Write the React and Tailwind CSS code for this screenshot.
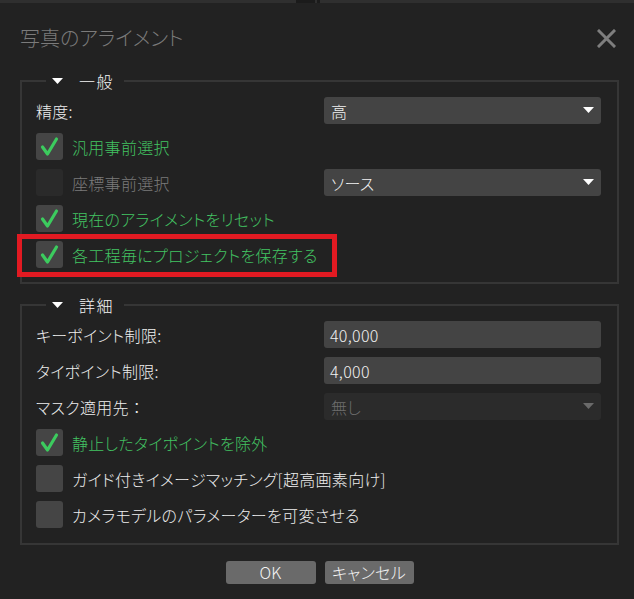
import React from "react";

const Check = () => (
  <svg width="27" height="27" viewBox="0 0 27 27">
    <polyline points="6.5,14 11.5,21 20.5,6" fill="none" stroke="#3ccb5e" strokeWidth="3.2" strokeLinecap="round" strokeLinejoin="round" />
  </svg>
);

const Arrow = ({ color = "#ffffff" }) => (
  <svg width="11" height="7" viewBox="0 0 11 7">
    <polygon points="0,0 11,0 5.5,6" fill={color} />
  </svg>
);

const CheckRow = ({ checked, disabled, label, children }) => (
  <div className="relative flex items-center h-[27px]">
    <div className={`w-[27px] h-[27px] rounded-[3px] ${disabled ? "bg-[#2a2a2a]" : "bg-[#454545]"}`}>
      {checked ? <Check /> : null}
    </div>
    <span className={`ml-[9px] ${checked ? "text-[#43c463]" : disabled ? "text-[#7b7b7b]" : "text-[#eeeeee]"}`}>{label}</span>
    {children}
  </div>
);

const Select = ({ value, disabled }) => (
  <div className={`w-[277px] h-[27px] rounded-[3px] flex items-center justify-between pl-[7px] pr-[7px] ${disabled ? "bg-[#2b2b2b] text-[#6e6e6e]" : "bg-[#444444] text-[#f2f2f2]"}`}>
    <span>{value}</span>
    <Arrow color={disabled ? "#6a6a6a" : "#ffffff"} />
  </div>
);

const Input = ({ value }) => (
  <div className="w-[277px] h-[27px] rounded-[3px] flex items-center pl-[6px] bg-[#444444] text-[#f2f2f2]">{value}</div>
);

const LabelRow = ({ label, children }) => (
  <div className="flex items-center justify-between h-[27px]">
    <span className="text-[#eeeeee]">{label}</span>
    {children}
  </div>
);

const Legend = ({ text }) => (
  <div className="-mt-[12px] ml-[10px] w-fit h-[22px] bg-[#222222] pl-[6px] pr-[10px] flex items-center gap-[16px]">
    <Arrow />
    <span className="text-[#f4f4f4] tracking-[1.5px]">{text}</span>
  </div>
);

export default function App() {
  return (
    <div
      className="w-[634px] h-[599px] bg-[#222222] overflow-hidden text-[16px] font-light leading-[20px] tracking-[0.3px] font-['Noto_Sans_CJK_JP','Noto_Sans',sans-serif] [font-feature-settings:'palt']"
    >
      <div className="h-[3px] flex">
        <div className="w-[296px] bg-[#2f2f2f]" />
        <div className="w-[19px] bg-[#1b1b1b]" />
        <div className="w-[2px] bg-[#2f2f2f]" />
        <div className="w-[3px] bg-[#1b1b1b]" />
        <div className="flex-1 bg-[#2f2f2f]" />
      </div>
      <div className="pl-[20px] pr-[15px]">
        <div className="mt-[21px] h-[28px] flex items-center justify-between">
          <span className="text-[20px] leading-[28px] text-[#7b7b7b] tracking-[0px]">写真のアライメント</span>
          <svg width="19" height="19" viewBox="0 0 19 19" className="mr-[3px]">
            <path d="M2 2 L17 17 M17 2 L2 17" stroke="#7e7e7e" strokeWidth="3" strokeLinecap="square" />
          </svg>
        </div>

        <div className="mt-[28px] border-2 border-[#363636] pl-[14px] pr-[16px] pb-[14px]">
          <Legend text="一般" />
          <div className="pt-[5px] flex flex-col gap-[9px]">
            <LabelRow label="精度:">
              <Select value="高" />
            </LabelRow>
            <CheckRow checked label="汎用事前選択" />
            <div className="flex items-center justify-between">
              <CheckRow disabled label="座標事前選択" />
              <Select value="ソース" />
            </div>
            <CheckRow checked label="現在のアライメントをリセット" />
            <CheckRow checked label="各工程毎にプロジェクトを保存する">
              <div className="absolute left-[-19px] top-[-7px] w-[320px] h-[43px] border-[5px] border-[#e21a22]" />
            </CheckRow>
          </div>
        </div>

        <div className="mt-[20px] border-2 border-[#363636] pl-[14px] pr-[16px] pb-[15px]">
          <Legend text="詳細" />
          <div className="pt-[5px] flex flex-col gap-[9px]">
            <LabelRow label="キーポイント制限:">
              <Input value="40,000" />
            </LabelRow>
            <LabelRow label="タイポイント制限:">
              <Input value="4,000" />
            </LabelRow>
            <LabelRow label="マスク適用先 ：">
              <Select value="無し" disabled />
            </LabelRow>
            <CheckRow checked label="静止したタイポイントを除外" />
            <CheckRow label="ガイド付きイメージマッチング[超高画素向け]" />
            <CheckRow label="カメラモデルのパラメーターを可変させる" />
          </div>
        </div>

        <div className="mt-[16px] flex justify-center gap-[9px]">
          <button className="w-[90px] h-[23px] rounded-[3px] bg-[#6a6a6a] text-[#f4f4f4] leading-[23px]">OK</button>
          <button className="w-[89px] h-[23px] rounded-[3px] bg-[#6a6a6a] text-[#f4f4f4] leading-[23px]">キャンセル</button>
        </div>
      </div>
    </div>
  );
}
